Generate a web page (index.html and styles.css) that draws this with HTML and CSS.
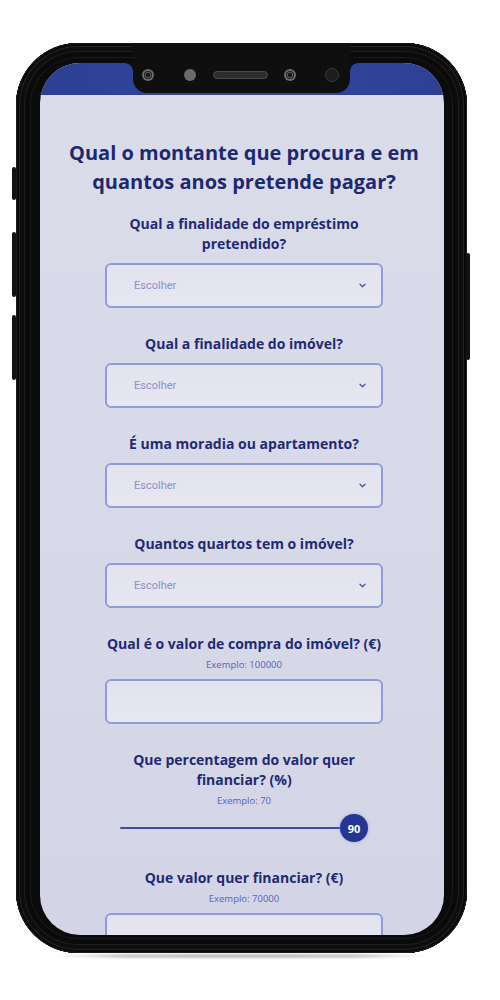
FILE: index.html
```html
<!DOCTYPE html>
<html lang="pt">
<head>
<meta charset="utf-8">
<title>Simulador</title>
<link rel="stylesheet" href="styles.css">
</head>
<body>
<div class="stage">
  <div class="phone">
    <span class="side-btn btn-l1"></span>
    <span class="side-btn btn-l2"></span>
    <span class="side-btn btn-l3"></span>
    <span class="side-btn btn-r1"></span>
    <div class="screen">
      <div class="statusbar"></div>
      <div class="content">
        <h1 class="title">Qual o montante que procura e em quantos anos pretende pagar?</h1>
        <div class="form">
          <div class="field">
            <div class="q">Qual a finalidade do empréstimo pretendido?</div>
            <div class="select"><span>Escolher</span><svg class="chev" width="7" height="5" viewBox="0 0 7 5"><path d="M1 1.2l2.5 2.5 2.5-2.5" fill="none" stroke="#4a559f" stroke-width="1.3" stroke-linecap="round" stroke-linejoin="round"/></svg></div>
          </div>
          <div class="field">
            <div class="q">Qual a finalidade do imóvel?</div>
            <div class="select"><span>Escolher</span><svg class="chev" width="7" height="5" viewBox="0 0 7 5"><path d="M1 1.2l2.5 2.5 2.5-2.5" fill="none" stroke="#4a559f" stroke-width="1.3" stroke-linecap="round" stroke-linejoin="round"/></svg></div>
          </div>
          <div class="field">
            <div class="q">É uma moradia ou apartamento?</div>
            <div class="select"><span>Escolher</span><svg class="chev" width="7" height="5" viewBox="0 0 7 5"><path d="M1 1.2l2.5 2.5 2.5-2.5" fill="none" stroke="#4a559f" stroke-width="1.3" stroke-linecap="round" stroke-linejoin="round"/></svg></div>
          </div>
          <div class="field">
            <div class="q">Quantos quartos tem o imóvel?</div>
            <div class="select"><span>Escolher</span><svg class="chev" width="7" height="5" viewBox="0 0 7 5"><path d="M1 1.2l2.5 2.5 2.5-2.5" fill="none" stroke="#4a559f" stroke-width="1.3" stroke-linecap="round" stroke-linejoin="round"/></svg></div>
          </div>
          <div class="field">
            <div class="q q-ex">Qual é o valor de compra do imóvel? (€)</div>
            <div class="ex">Exemplo: 100000</div>
            <div class="input"></div>
          </div>
          <div class="field">
            <div class="q q-ex">Que percentagem do valor quer financiar? (%)</div>
            <div class="ex">Exemplo: 70</div>
            <div class="slider">
              <div class="track"></div>
              <div class="thumb">90</div>
            </div>
          </div>
          <div class="field">
            <div class="q q-ex">Que valor quer financiar? (€)</div>
            <div class="ex">Exemplo: 70000</div>
            <div class="input"></div>
          </div>
        </div>
      </div>
    </div>
    <div class="notch">
      <span class="cam"></span>
      <span class="dot"></span>
      <span class="speaker"></span>
      <span class="cam cam2"></span>
      <span class="dot dot2"></span>
    </div>
  </div>
  <div class="floor-shadow"></div>
</div>
</body>
</html>
```

FILE: styles.css
```css
* { box-sizing: border-box; }

html, body {
  margin: 0;
  padding: 0;
  background: #ffffff;
}

body {
  font-family: "Open Sans", "Liberation Sans", sans-serif;
}

.stage {
  width: 500px;
  height: 1000px;
  padding-top: 43px;
  padding-left: 16px;
}

.phone {
  position: relative;
  width: 451px;
  height: 910px;
  padding: 20px 23px 18px 24px;
  border-radius: 62px;
  background: #0b0b0c;
  box-shadow:
    inset 0 0 0 1px #1c1c1e,
    inset 0 0 0 3px #080809,
    inset 0 0 0 4px #252527,
    inset 0 0 0 8px #0d0d0e,
    inset 0 0 0 9px #1f1f21,
    inset 0 0 0 14px #0a0a0b,
    inset 0 0 0 15px #1a1a1c;
}

.side-btn {
  position: absolute;
  width: 4px;
  background: #121213;
  border-radius: 2px;
}
.btn-l1 { left: -4px; top: 124px; height: 33px; }
.btn-l2 { left: -4px; top: 189px; height: 65px; }
.btn-l3 { left: -4px; top: 272px; height: 65px; }
.btn-r1 { right: -3px; top: 210px; height: 107px; }

.screen {
  height: 100%;
  border-radius: 40px;
  overflow: hidden;
  display: flex;
  flex-direction: column;
  background: linear-gradient(180deg, #dadcea 0%, #d7d9e9 60%, #d3d5e6 100%);
}

.statusbar {
  flex: 0 0 32px;
  background: linear-gradient(90deg, #2c3f93 0%, #33469b 50%, #2d4094 100%);
}

.content {
  padding: 43px 14px 0 18px;
  display: flex;
  flex-direction: column;
  align-items: center;
}

.title {
  margin: 0 0 18px;
  font-size: 20px;
  line-height: 29px;
  font-weight: 700;
  color: #1d2870;
  text-align: center;
}

.form {
  width: 278px;
  display: flex;
  flex-direction: column;
  gap: 26px;
}

.field {
  display: flex;
  flex-direction: column;
}

.q {
  font-size: 14px;
  line-height: 20px;
  font-weight: 700;
  color: #1f2a72;
  text-align: center;
  margin-bottom: 9px;
}
.q.q-ex { margin-bottom: 4px; }

.ex {
  font-size: 9.5px;
  line-height: 13px;
  color: #5763b2;
  text-align: center;
  margin-bottom: 8px;
}

.select,
.input {
  height: 45px;
  border: 2px solid #929bda;
  border-radius: 6px;
  background: linear-gradient(180deg, #e2e3ee, #e6e7f1);
}

.select {
  display: flex;
  align-items: center;
  justify-content: space-between;
  padding: 0 15px 0 27px;
  font-family: "Roboto", "Liberation Sans", sans-serif;
  font-size: 11px;
  color: #8a90c8;
}

.chev { display: block; }

.slider {
  height: 28px;
  margin-top: -1px;
  display: flex;
  align-items: center;
  padding: 0 15px;
}

.track {
  flex: 1;
  height: 2px;
  background: #3e4ea6;
  border-radius: 1px;
}

.thumb {
  width: 28px;
  height: 28px;
  border-radius: 50%;
  background: #243594;
  color: #ffffff;
  font-size: 11px;
  font-weight: 700;
  display: flex;
  align-items: center;
  justify-content: center;
  box-shadow: 0 0 3px rgba(36, 53, 148, 0.35);
}

.notch {
  position: absolute;
  left: 117px;
  top: 0;
  width: 217px;
  height: 50px;
  background: #0f0f10;
  border-radius: 0 0 14px 14px;
  display: flex;
  align-items: center;
  padding: 14px 0 0 9px;
}
.notch::before,
.notch::after {
  content: "";
  position: absolute;
  top: 20px;
  width: 8px;
  height: 8px;
}
.notch::before {
  left: -8px;
  background: radial-gradient(circle at 0 100%, transparent 7.5px, #0f0f10 8px);
}
.notch::after {
  right: -8px;
  background: radial-gradient(circle at 100% 100%, transparent 7.5px, #0f0f10 8px);
}

.cam {
  width: 12px;
  height: 12px;
  border-radius: 50%;
  background: radial-gradient(circle, #1a1a1a 0 2px, #555 2.5px 3px, #2a2a2a 3.5px 4px, #6a6a6a 4.5px);
  flex: 0 0 auto;
}
.dot {
  width: 12px;
  height: 12px;
  border-radius: 50%;
  background: #6b6b6d;
  margin-left: 30px;
  flex: 0 0 auto;
}
.speaker {
  width: 55px;
  height: 8px;
  border-radius: 4px;
  background: #2e2e30;
  border: 1px solid #4a4a4c;
  margin-left: 17px;
  flex: 0 0 auto;
}
.cam2 { margin-left: 16px; }
.dot2 {
  width: 14px;
  height: 14px;
  background: #1c1c1d;
  border: 1px solid #3c3c3e;
  margin-left: 29px;
}

.floor-shadow {
  margin: 1px 0 0 39px;
  width: 372px;
  height: 4px;
  border-radius: 50%;
  background: linear-gradient(90deg, rgba(0,0,0,0.05), rgba(0,0,0,0.25) 20%, rgba(0,0,0,0.25) 80%, rgba(0,0,0,0.05));
  filter: blur(1px);
}
```
